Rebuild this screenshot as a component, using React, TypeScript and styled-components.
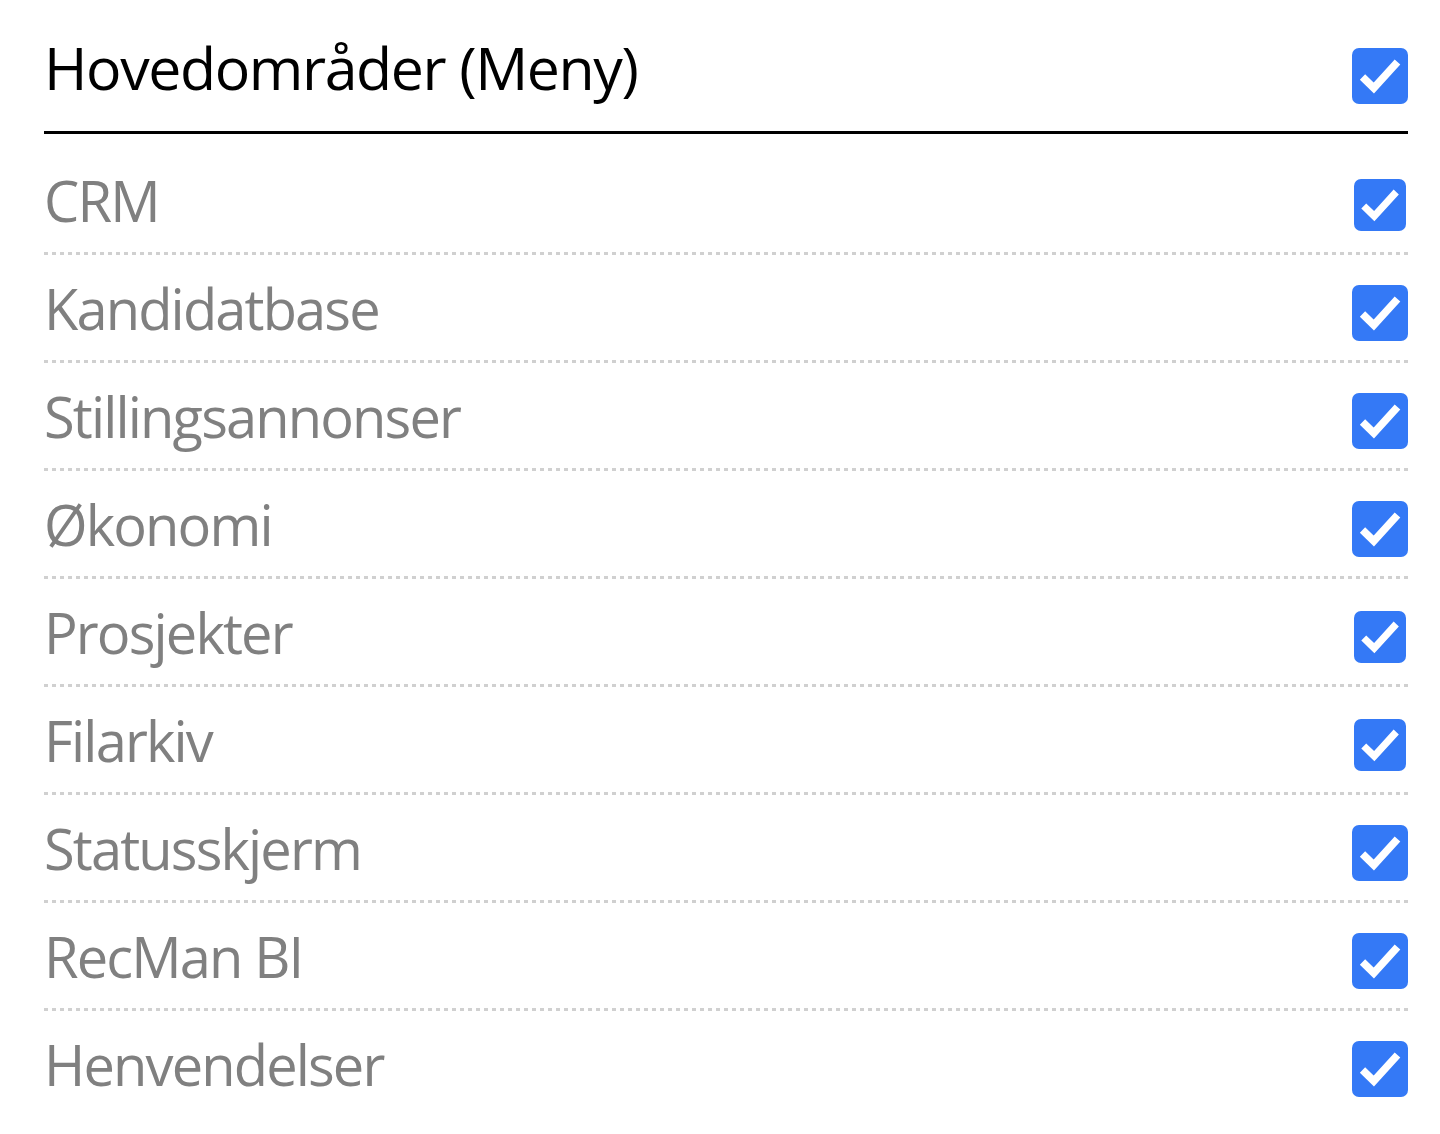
import React from "react";
import styled, { createGlobalStyle } from "styled-components";

const GlobalStyle = createGlobalStyle`
  html, body {
    margin: 0;
    padding: 0;
    background: #ffffff;
  }
  body {
    font-family: "Open Sans", "Noto Sans", "Liberation Sans", sans-serif;
  }
`;

const Page = styled.div`
  padding: 0 32px 0 44px;
  box-sizing: border-box;
  width: 1440px;
`;

const Header = styled.div`
  display: flex;
  justify-content: space-between;
  align-items: flex-start;
  height: 134px;
  padding-top: 27px;
  box-sizing: border-box;
  border-bottom: 3px solid #000000;
`;

const Title = styled.h1`
  margin: 0;
  font-size: 59px;
  line-height: 80px;
  font-weight: 400;
  color: #000000;
  letter-spacing: -1.4px;
`;

const List = styled.div`
  padding-top: 13px;
`;

const Row = styled.div<{ $last?: boolean }>`
  display: flex;
  justify-content: space-between;
  align-items: center;
  height: 105px;
  position: relative;
  margin-bottom: ${(p) => (p.$last ? "0" : "3px")};

  &::after {
    content: "";
    display: ${(p) => (p.$last ? "none" : "block")};
    position: absolute;
    left: 0;
    right: 0;
    bottom: -3px;
    height: 3px;
    background-image: repeating-linear-gradient(
      to right,
      #d0d0d0 0 3.5px,
      transparent 3.5px 8px
    );
  }
`;

const Label = styled.span`
  font-size: 56px;
  line-height: 80px;
  color: #808080;
  font-weight: 400;
  letter-spacing: -1.85px;
`;

const Box = styled.span<{ $size: number; $offset: number }>`
  display: inline-flex;
  align-items: center;
  justify-content: center;
  width: ${(p) => p.$size}px;
  height: ${(p) => p.$size}px;
  margin-top: ${(p) => p.$offset}px;
  margin-right: ${(p) => (56 - p.$size) / 2}px;
  border-radius: ${(p) => Math.round(p.$size * 0.13)}px;
  background: #3479f6;
  flex-shrink: 0;

  svg {
    width: 100%;
    height: 100%;
    display: block;
  }
`;

const Check: React.FC<{ size?: number; offset?: number }> = ({
  size = 56,
  offset = 10,
}) => (
  <Box $size={size} $offset={offset} role="checkbox" aria-checked="true">
    <svg viewBox="0 0 56 56">
      <path
        d="M10.5 29 L21.8 40 L45.5 14"
        fill="none"
        stroke="#ffffff"
        strokeWidth="7.6"
        strokeLinecap="butt"
        strokeLinejoin="miter"
      />
    </svg>
  </Box>
);

const items: { label: string; size: number }[] = [
  { label: "CRM", size: 52 },
  { label: "Kandidatbase", size: 56 },
  { label: "Stillingsannonser", size: 56 },
  { label: "Økonomi", size: 56 },
  { label: "Prosjekter", size: 52 },
  { label: "Filarkiv", size: 52 },
  { label: "Statusskjerm", size: 56 },
  { label: "RecMan BI", size: 56 },
  { label: "Henvendelser", size: 56 },
];

export default function App() {
  return (
    <>
      <GlobalStyle />
      <Page>
        <Header>
          <Title>Hovedområder (Meny)</Title>
          <Check size={56} offset={21} />
        </Header>
        <List>
          {items.map((it, i) => (
            <Row key={it.label} $last={i === items.length - 1}>
              <Label>{it.label}</Label>
              <Check size={it.size} />
            </Row>
          ))}
        </List>
      </Page>
    </>
  );
}
